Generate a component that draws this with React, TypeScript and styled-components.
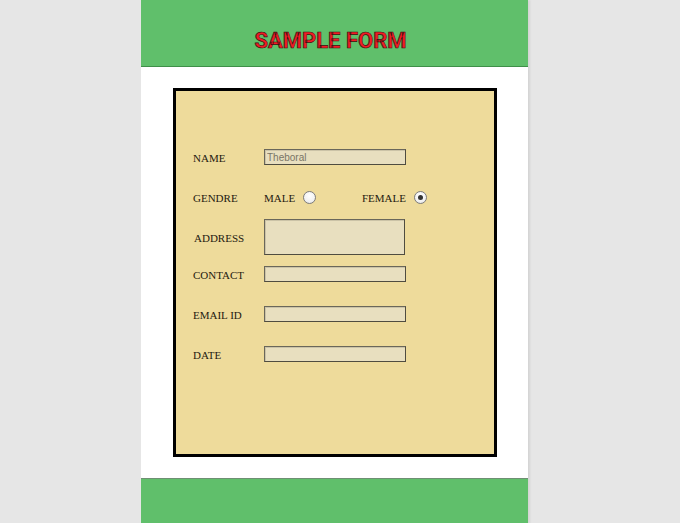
import React from 'react';
import styled, { createGlobalStyle } from 'styled-components';

const GlobalStyle = createGlobalStyle`
  html, body {
    margin: 0;
    padding: 0;
    background: #e6e6e6;
  }
  body {
    font-family: 'Liberation Serif', 'Times New Roman', serif;
  }
`;

const Page = styled.div`
  display: flex;
  padding-left: 141px;
  min-height: 523px;
`;

const Column = styled.div`
  width: 387px;
  background: #ffffff;
  box-shadow: 2px 0 2px rgba(0, 0, 0, 0.08);
  display: flex;
  flex-direction: column;
`;

const Header = styled.header`
  height: 67px;
  background: #60bf6b;
  border-bottom: 1px solid #3f8f49;
  display: flex;
  align-items: flex-end;
  justify-content: center;
  padding-bottom: 14px;
  box-sizing: border-box;
`;

const Title = styled.h1`
  margin: 0 0 0 -8px;
  font-family: Roboto, 'Liberation Sans', sans-serif;
  font-weight: 700;
  font-size: 22px;
  line-height: 22px;
  color: #f01c24;
  -webkit-text-stroke: 0.7px #3a1010;
`;

const Body = styled.main`
  padding: 21px 31px 21px 32px;
`;

const FormBox = styled.form`
  height: 369px;
  box-sizing: border-box;
  border: 3px solid #000;
  background: #eedb9b;
  padding: 58px 0 0 17px;
  display: flex;
  flex-direction: column;
`;

const Row = styled.div<{ $top?: number; $height?: number }>`
  display: flex;
  align-items: center;
  margin-top: ${(p) => p.$top ?? 0}px;
  height: ${(p) => p.$height ?? 16}px;
`;

const Label = styled.label<{ $indent?: number }>`
  width: 71px;
  flex: none;
  padding-top: 2px;
  text-indent: ${(p) => p.$indent ?? 0}px;
  font-size: 11px;
  color: #1e1a10;
`;

const TextField = styled.input`
  width: 142px;
  height: 16px;
  box-sizing: border-box;
  margin: 0;
  padding: 0 2px;
  background: #e8dfbf;
  border: 1px solid #4f4c40;
  border-top-color: #6a675a;
  border-left-color: #6a675a;
  box-shadow: inset 1px 1px 0 rgba(0, 0, 0, 0.12);
  font-family: 'Liberation Sans', Arial, sans-serif;
  font-size: 10px;
  color: #7a7566;
  outline: none;
`;

const TextArea = styled.textarea`
  width: 141px;
  height: 36px;
  box-sizing: border-box;
  margin: 0;
  padding: 2px;
  background: #e8dfbf;
  border: 1px solid #4f4c40;
  border-top-color: #6a675a;
  border-left-color: #6a675a;
  box-shadow: inset 1px 1px 0 rgba(0, 0, 0, 0.12);
  resize: none;
  outline: none;
`;

const Choice = styled.span<{ $width?: number }>`
  display: flex;
  align-items: center;
  gap: 8px;
  width: ${(p) => (p.$width ? `${p.$width}px` : 'auto')};
  padding-top: 1px;
  font-size: 11px;
  color: #1e1a10;
`;

const Radio = styled.input.attrs({ type: 'radio' })`
  appearance: none;
  -webkit-appearance: none;
  margin: 0;
  width: 13px;
  height: 13px;
  border-radius: 50%;
  border: 1px solid #7c7c7c;
  background: radial-gradient(circle at 50% 35%, #ffffff 0%, #f2f2f2 60%, #dcdcdc 100%);
  box-sizing: border-box;
  display: grid;
  place-items: center;

  &:checked::after {
    content: '';
    width: 5px;
    height: 5px;
    border-radius: 50%;
    background: #333;
  }
`;

const Footer = styled.footer`
  margin-top: auto;
  height: 45px;
  background: #60bf6b;
  border-top: 1px solid #6f8f73;
`;

const App: React.FC = () => {
  return (
    <>
      <GlobalStyle />
      <Page>
        <Column>
          <Header>
            <Title>SAMPLE FORM</Title>
          </Header>
          <Body>
            <FormBox onSubmit={(e) => e.preventDefault()}>
              <Row>
                <Label>NAME</Label>
                <TextField type="text" defaultValue="Theboral" />
              </Row>
              <Row $top={24}>
                <Label>GENDRE</Label>
                <Choice $width={98}>
                  MALE
                  <Radio name="gender" value="male" />
                </Choice>
                <Choice>
                  FEMALE
                  <Radio name="gender" value="female" defaultChecked />
                </Choice>
              </Row>
              <Row $top={14} $height={36}>
                <Label $indent={1}>ADDRESS</Label>
                <TextArea />
              </Row>
              <Row $top={11}>
                <Label>CONTACT</Label>
                <TextField type="text" />
              </Row>
              <Row $top={24}>
                <Label>EMAIL ID</Label>
                <TextField type="text" />
              </Row>
              <Row $top={24}>
                <Label>DATE</Label>
                <TextField type="text" />
              </Row>
            </FormBox>
          </Body>
          <Footer />
        </Column>
      </Page>
    </>
  );
};

export default App;
